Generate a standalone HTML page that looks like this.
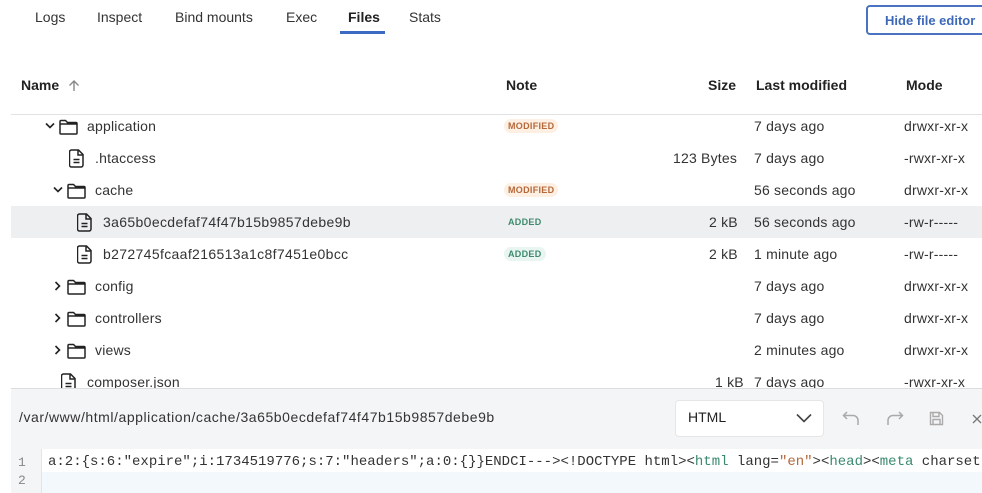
<!DOCTYPE html>
<html><head><meta charset="utf-8"><style>
*{margin:0;padding:0;box-sizing:border-box}
body{width:982px;height:493px;overflow:hidden;background:#fff;font-family:"Liberation Sans",sans-serif;font-size:14px;color:#333;position:relative}
.a{position:absolute;white-space:nowrap}
.tab{position:absolute;top:9px;font-size:14px;color:#333}
.h{position:absolute;top:77px;font-weight:bold;font-size:14px;color:#222}
.row{position:absolute;left:11px;width:971px;height:32px}
.t{position:absolute;top:8px;white-space:nowrap;color:#333;letter-spacing:0.2px}
.badge{position:absolute;top:9px;font-size:9px;font-weight:bold;padding:2px 4px;border-radius:8px;letter-spacing:.3px}
.mod{background:#fdf0e2;color:#b5683a}
.add{background:#e8f5f0;color:#3f8a6e}
svg{position:absolute}
</style></head><body>
<div class="tab" style="left:35px">Logs</div>
<div class="tab" style="left:97px">Inspect</div>
<div class="tab" style="left:175px">Bind mounts</div>
<div class="tab" style="left:286px">Exec</div>
<div class="tab" style="left:348px;font-weight:bold;color:#222">Files</div>
<div class="tab" style="left:409px">Stats</div>
<div class="a" style="left:340px;top:31px;width:45px;height:3px;background:#3d6bc4"></div>
<div class="a" style="left:866px;top:5px;width:130px;height:30px;border:2px solid #4a72c0;border-radius:4px;color:#3d68b8;font-weight:bold;font-size:13px;padding:6px 0 0 17px">Hide file editor</div>

<div class="h" style="left:21px">Name</div>
<svg style="left:68px;top:79px" width="12" height="13" viewBox="0 0 12 13"><path d="M6 12V2M1.5 6.5L6 2l4.5 4.5" fill="none" stroke="#888" stroke-width="1.4"/></svg>
<div class="h" style="left:506px">Note</div>
<div class="h" style="left:708px">Size</div>
<div class="h" style="left:756px">Last modified</div>
<div class="h" style="left:906px">Mode</div>
<div class="a" style="left:11px;top:114px;width:971px;height:1px;background:#e2e2e2"></div>

<div class="row" style="top:110px">
<svg style="left:34px;top:12px" width="10" height="8"><path d="M1 1.5l4 4 4-4" fill="none" stroke="#222" stroke-width="1.6"/></svg>
<svg style="left:48px;top:9px" width="19" height="16"><path d="M1 2.5a1 1 0 0 1 1-1h4.5l2 2H17a1 1 0 0 1 1 1V14a1 1 0 0 1-1 1H2a1 1 0 0 1-1-1z M1 5h17" fill="none" stroke="#222" stroke-width="1.5"/></svg>
<div class="t" style="left:76px">application</div>
<div class="badge mod" style="left:493px">MODIFIED</div>
<div class="t" style="left:743px">7 days ago</div><div class="t" style="left:893px">drwxr-xr-x</div></div>

<div class="row" style="top:142px">
<svg style="left:58px;top:7px" width="16" height="19"><path d="M2.5 1h7l4.5 4.5V16a2 2 0 0 1-2 2h-9.5a2 2 0 0 1-2-2V3a2 2 0 0 1 2-2z M9 1v5h5 M4.5 10.5h6 M4.5 13.5h6" fill="none" stroke="#222" stroke-width="1.5"/></svg>
<div class="t" style="left:84px">.htaccess</div>
<div class="t" style="left:662px">123 Bytes</div>
<div class="t" style="left:743px">7 days ago</div><div class="t" style="left:893px">-rwxr-xr-x</div></div>

<div class="row" style="top:174px">
<svg style="left:42px;top:12px" width="10" height="8"><path d="M1 1.5l4 4 4-4" fill="none" stroke="#222" stroke-width="1.6"/></svg>
<svg style="left:56px;top:9px" width="19" height="16"><path d="M1 2.5a1 1 0 0 1 1-1h4.5l2 2H17a1 1 0 0 1 1 1V14a1 1 0 0 1-1 1H2a1 1 0 0 1-1-1z M1 5h17" fill="none" stroke="#222" stroke-width="1.5"/></svg>
<div class="t" style="left:84px">cache</div>
<div class="badge mod" style="left:493px">MODIFIED</div>
<div class="t" style="left:743px">56 seconds ago</div><div class="t" style="left:893px">drwxr-xr-x</div></div>

<div class="row" style="top:206px;background:#eeeff0">
<svg style="left:66px;top:7px" width="16" height="19"><path d="M2.5 1h7l4.5 4.5V16a2 2 0 0 1-2 2h-9.5a2 2 0 0 1-2-2V3a2 2 0 0 1 2-2z M9 1v5h5 M4.5 10.5h6 M4.5 13.5h6" fill="none" stroke="#222" stroke-width="1.5"/></svg>
<div class="t" style="left:92px;letter-spacing:0.35px">3a65b0ecdefaf74f47b15b9857debe9b</div>
<div class="badge add" style="left:493px;background:none">ADDED</div>
<div class="t" style="left:698px">2 kB</div>
<div class="t" style="left:743px">56 seconds ago</div><div class="t" style="left:893px">-rw-r-----</div></div>

<div class="row" style="top:238px">
<svg style="left:66px;top:7px" width="16" height="19"><path d="M2.5 1h7l4.5 4.5V16a2 2 0 0 1-2 2h-9.5a2 2 0 0 1-2-2V3a2 2 0 0 1 2-2z M9 1v5h5 M4.5 10.5h6 M4.5 13.5h6" fill="none" stroke="#222" stroke-width="1.5"/></svg>
<div class="t" style="left:92px;letter-spacing:0.35px">b272745fcaaf216513a1c8f7451e0bcc</div>
<div class="badge add" style="left:493px">ADDED</div>
<div class="t" style="left:698px">2 kB</div>
<div class="t" style="left:743px">1 minute ago</div><div class="t" style="left:893px">-rw-r-----</div></div>

<div class="row" style="top:270px">
<svg style="left:43px;top:11px" width="8" height="10"><path d="M1.5 1l4 4-4 4" fill="none" stroke="#222" stroke-width="1.6"/></svg>
<svg style="left:56px;top:9px" width="19" height="16"><path d="M1 2.5a1 1 0 0 1 1-1h4.5l2 2H17a1 1 0 0 1 1 1V14a1 1 0 0 1-1 1H2a1 1 0 0 1-1-1z M1 5h17" fill="none" stroke="#222" stroke-width="1.5"/></svg>
<div class="t" style="left:84px">config</div>
<div class="t" style="left:743px">7 days ago</div><div class="t" style="left:893px">drwxr-xr-x</div></div>

<div class="row" style="top:302px">
<svg style="left:43px;top:11px" width="8" height="10"><path d="M1.5 1l4 4-4 4" fill="none" stroke="#222" stroke-width="1.6"/></svg>
<svg style="left:56px;top:9px" width="19" height="16"><path d="M1 2.5a1 1 0 0 1 1-1h4.5l2 2H17a1 1 0 0 1 1 1V14a1 1 0 0 1-1 1H2a1 1 0 0 1-1-1z M1 5h17" fill="none" stroke="#222" stroke-width="1.5"/></svg>
<div class="t" style="left:84px">controllers</div>
<div class="t" style="left:743px">7 days ago</div><div class="t" style="left:893px">drwxr-xr-x</div></div>

<div class="row" style="top:334px">
<svg style="left:43px;top:11px" width="8" height="10"><path d="M1.5 1l4 4-4 4" fill="none" stroke="#222" stroke-width="1.6"/></svg>
<svg style="left:56px;top:9px" width="19" height="16"><path d="M1 2.5a1 1 0 0 1 1-1h4.5l2 2H17a1 1 0 0 1 1 1V14a1 1 0 0 1-1 1H2a1 1 0 0 1-1-1z M1 5h17" fill="none" stroke="#222" stroke-width="1.5"/></svg>
<div class="t" style="left:84px">views</div>
<div class="t" style="left:743px">2 minutes ago</div><div class="t" style="left:893px">drwxr-xr-x</div></div>

<div class="row" style="top:366px">
<svg style="left:50px;top:7px" width="16" height="19"><path d="M2.5 1h7l4.5 4.5V16a2 2 0 0 1-2 2h-9.5a2 2 0 0 1-2-2V3a2 2 0 0 1 2-2z M9 1v5h5 M4.5 10.5h6 M4.5 13.5h6" fill="none" stroke="#222" stroke-width="1.5"/></svg>
<div class="t" style="left:76px">composer.json</div>
<div class="t" style="left:704px">1 kB</div>
<div class="t" style="left:743px">7 days ago</div><div class="t" style="left:893px">-rwxr-xr-x</div></div>

<div class="a" style="left:11px;top:388px;width:971px;height:105px;background:#f4f5f6;border-top:1px solid #ddd"></div>
<div class="a" style="left:19px;top:409px;color:#333;letter-spacing:0.55px">/var/www/html/application/cache/3a65b0ecdefaf74f47b15b9857debe9b</div>
<div class="a" style="left:675px;top:400px;width:149px;height:37px;background:#fff;border:1px solid #e6e6e6;border-radius:4px"></div>
<div class="a" style="left:688px;top:409px;color:#222">HTML</div>
<svg style="left:796px;top:413px" width="16" height="10"><path d="M1 1.5l7 7 7-7" fill="none" stroke="#444" stroke-width="1.6"/></svg>
<svg style="left:842px;top:410px" width="18" height="16"><path d="M5 2L1.5 5.5 5 9M1.5 5.5H11a5 5 0 0 1 5 5V15" fill="none" stroke="#aaa" stroke-width="1.5"/></svg>
<svg style="left:886px;top:410px" width="18" height="16"><path d="M13 2l3.5 3.5L13 9M16.5 5.5H7a5 5 0 0 0-5 5V15" fill="none" stroke="#aaa" stroke-width="1.5"/></svg>
<svg style="left:929px;top:411px" width="15" height="15"><path d="M1.5 1.5h9l3 3v9h-12z M4 1.5v4h6v-4 M4 13.5v-5h7v5" fill="none" stroke="#aaa" stroke-width="1.4"/></svg>
<svg style="left:972px;top:414px" width="10" height="10"><path d="M1 1l8 8M9 1l-8 8" fill="none" stroke="#777" stroke-width="1.3"/></svg>
<div class="a" style="left:42px;top:449px;width:940px;height:44px;background:#fff"></div>
<div class="a" style="left:42px;top:472px;width:940px;height:21px;background:#f3f8fd"></div>
<div class="a" style="left:11px;top:449px;width:31px;height:44px;background:#f4f5f6;border-right:1px solid #e4e4e4"></div>
<div class="a" style="left:18px;top:454px;font-family:'Liberation Mono',monospace;font-size:13px;color:#888;line-height:18px">1<br>2</div>
<div class="a" style="left:48px;top:453px;font-family:'Liberation Mono',monospace;font-size:14px;color:#333;line-height:18px">a:2:{s:6:"expire";i:1734519776;s:7:"headers";a:0:{}}ENDCI---&gt;&lt;!DOCTYPE html&gt;&lt;<span style="color:#3a8a70">html</span> lang=<span style="color:#b5683a">"en"</span>&gt;&lt;<span style="color:#3a8a70">head</span>&gt;&lt;<span style="color:#3a8a70">meta</span> charset</div>
</body></html>
